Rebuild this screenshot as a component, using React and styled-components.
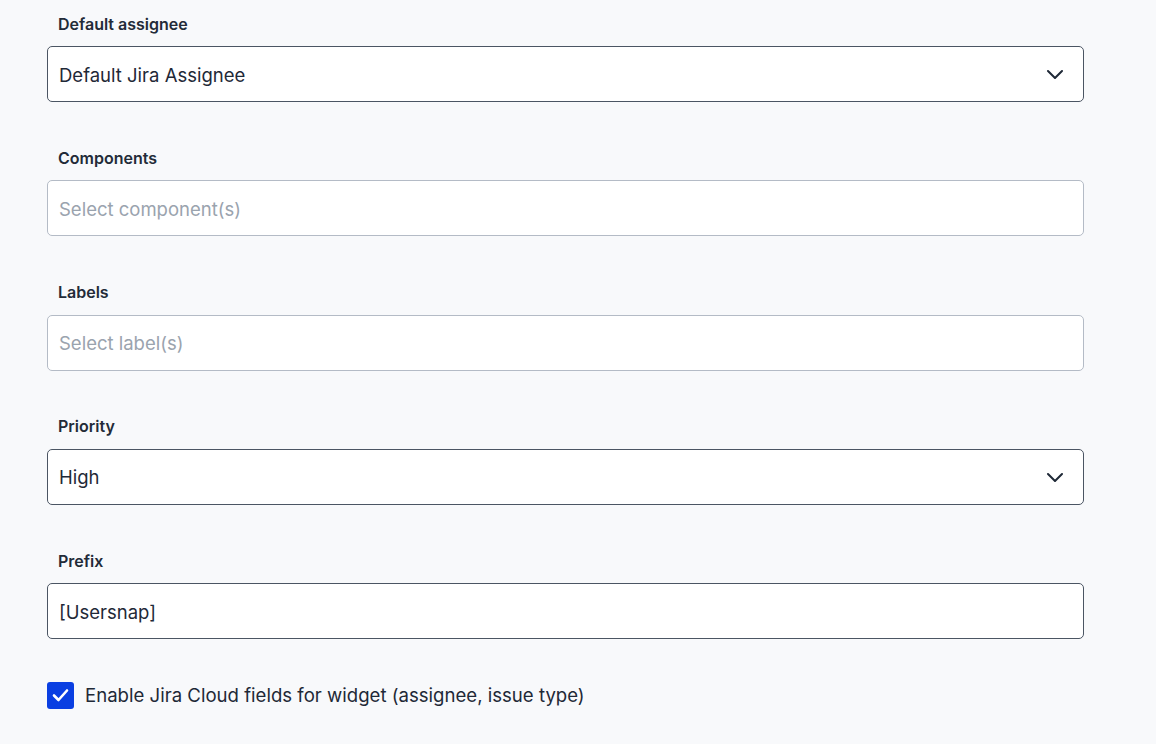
import React from 'react'
import styled, { createGlobalStyle } from 'styled-components'

const GlobalStyle = createGlobalStyle`
  body {
    margin: 0;
    background: #f8f9fb;
    font-family: Inter, "Noto Sans", sans-serif;
    color: #1f2937;
  }
`

function ChevronDown() {
  return (
    <svg width="18" height="10" viewBox="0 0 18 10" fill="none" stroke="#1f2937" strokeWidth="2" strokeLinecap="round" strokeLinejoin="round">
      <path d="M2 2l7 7 7-7" />
    </svg>
  )
}

function Field({ label, value, placeholder, select }) {
  return (
    <FieldWrap>
      <Label>{label}</Label>
      <Box filled={!!value}>
        {value ? <Value>{value}</Value> : <Placeholder>{placeholder}</Placeholder>}
        {select && <Chevron><ChevronDown /></Chevron>}
      </Box>
    </FieldWrap>
  )
}

function App() {
  return (
    <>
      <GlobalStyle />
      <Page>
        <Field label="Default assignee" value="Default Jira Assignee" select />
        <Field label="Components" placeholder="Select component(s)" />
        <Field label="Labels" placeholder="Select label(s)" />
        <Field label="Priority" value="High" select />
        <Field label="Prefix" value="[Usersnap]" />
        <CheckRow>
          <CheckBox>
            <svg width="17" height="14" viewBox="0 0 17 14" fill="none" stroke="#fff" strokeWidth="2.6" strokeLinecap="round" strokeLinejoin="round">
              <path d="M2 7.5l4.5 4.5L15 2.5" />
            </svg>
          </CheckBox>
          <CheckLabel>Enable Jira Cloud fields for widget (assignee, issue type)</CheckLabel>
        </CheckRow>
      </Page>
    </>
  )
}

export default App

const Page = styled.div`
  width: 1037px;
  padding: 12px 0 0 47px;
`

const FieldWrap = styled.div`
  margin-bottom: 44.3px;
`

const Label = styled.div`
  height: 20px;
  line-height: 20px;
  font-size: 16px;
  font-weight: 600;
  color: #232b38;
  padding: 1.5px 0 0 11px;
  margin-bottom: 12.5px;
`

const Box = styled.div`
  box-sizing: border-box;
  height: 56px;
  display: flex;
  align-items: center;
  justify-content: space-between;
  padding: 0 19px 0 11px;
  background: #fff;
  border: 1px solid ${p => (p.filled ? '#4b5563' : '#b4bbc6')};
  border-radius: 5px;
  font-size: 18.5px;
`

const Value = styled.span`
  color: #1f2937;
  padding-top: 1px;
`

const Placeholder = styled.span`
  color: #9aa3ae;
  padding-top: 1px;
`

const Chevron = styled.span`
  display: flex;
  align-items: center;
`

const CheckRow = styled.div`
  display: flex;
  align-items: center;
  gap: 11px;
  margin-top: -1.5px;
`

const CheckBox = styled.span`
  width: 27px;
  height: 27px;
  border-radius: 3px;
  background: #0a3fe2;
  display: flex;
  align-items: center;
  justify-content: center;
`

const CheckLabel = styled.span`
  font-size: 18.6px;
  color: #1f2937;
`
